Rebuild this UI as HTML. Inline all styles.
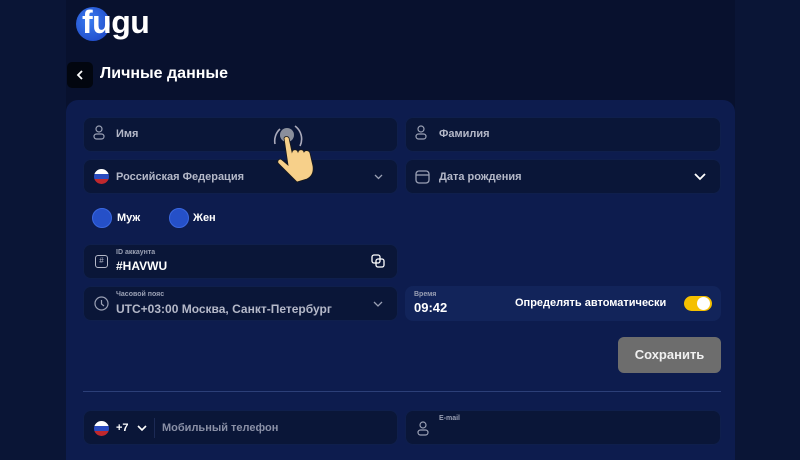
<!DOCTYPE html><html><head><meta charset="utf-8"><style>
*{margin:0;padding:0;box-sizing:border-box}
body{width:800px;height:450px;background:#0a1536;font-family:"Liberation Sans",sans-serif;position:relative;overflow:hidden;color:#fff}
.top{position:absolute;left:66px;top:0;width:669px;height:450px;background:#08112e}
.panel{position:absolute;left:66px;top:100px;width:669px;height:360px;background:#0d1c4e;border-radius:12px 12px 0 0}
.f{position:absolute;background:#0a1638;border-radius:8px;border:1px solid #0f1f4c}
.t{position:absolute;font-weight:bold;font-size:11px;color:#b4b8c8}
.a{position:absolute}
</style></head><body>
<div class="top"></div>
<div class="a" style="left:76px;top:7px;width:34px;height:34px;border-radius:50%;background:radial-gradient(circle at 40% 40%,#3a7cf0,#1a3fc0)"></div>
<div class="a" style="left:82px;top:4px;font-size:32px;font-weight:bold;letter-spacing:-0.5px;color:#fff;line-height:36px">fugu</div>
<div class="a" style="left:67px;top:62px;width:26px;height:26px;background:#02060f;border-radius:5px"></div>
<svg class="a" style="left:76px;top:70px" width="8" height="10" fill="none" stroke="#fff" stroke-width="1.8"><path d="M6 1L2 5l4 4"/></svg>
<div class="a" style="left:100px;top:65px;font-size:16px;font-weight:bold">Личные данные</div>
<div class="panel"></div>

<div class="f" style="left:83px;top:117px;width:315px;height:35px"></div>
<div class="t" style="left:116px;top:128px">Имя</div>
<div class="f" style="left:405px;top:117px;width:316px;height:35px"></div>
<div class="t" style="left:439px;top:128px">Фамилия</div>
<svg class="a" style="left:92px;top:125px" width="14" height="16" fill="none" stroke="#9aa0b4" stroke-width="1.2"><circle cx="7" cy="4" r="3"/><rect x="2" y="9" width="10" height="5" rx="2.5"/></svg>
<svg class="a" style="left:414px;top:125px" width="14" height="16" fill="none" stroke="#9aa0b4" stroke-width="1.2"><circle cx="7" cy="4" r="3"/><rect x="2" y="9" width="10" height="5" rx="2.5"/></svg>

<div class="f" style="left:83px;top:159px;width:315px;height:35px"></div>
<div class="a" style="left:94px;top:169px;width:15px;height:15px;border-radius:50%;background:linear-gradient(#fff 33%,#2a4bbf 33% 66%,#c0282d 66%)"></div>
<div class="t" style="left:116px;top:171px">Российская Федерация</div>
<svg class="a" style="left:374px;top:174px" width="9" height="6" fill="none" stroke="#9aa0b4" stroke-width="1.3"><path d="M1 1l3.5 3.5L8 1"/></svg>
<div class="f" style="left:405px;top:159px;width:316px;height:35px"></div>
<svg class="a" style="left:415px;top:169px" width="15" height="15" fill="none" stroke="#9aa0b4" stroke-width="1.3"><rect x="1" y="2" width="13" height="12" rx="3"/><path d="M1 6h13"/></svg>
<div class="t" style="left:439px;top:171px">Дата рождения</div>
<svg class="a" style="left:694px;top:173px" width="12" height="8" fill="none" stroke="#fff" stroke-width="1.8"><path d="M1 1l5 5 5-5"/></svg>

<div class="a" style="left:92px;top:208px;width:20px;height:20px;border-radius:50%;background:#2550c8;border:1px solid #3a68e0"></div>
<div class="t" style="left:117px;top:212px;color:#fff">Муж</div>
<div class="a" style="left:169px;top:208px;width:20px;height:20px;border-radius:50%;background:#2550c8;border:1px solid #3a68e0"></div>
<div class="t" style="left:193px;top:212px;color:#fff">Жен</div>

<div class="f" style="left:83px;top:244px;width:315px;height:35px"></div>
<div class="a" style="left:95px;top:255px;width:13px;height:13px;border:1.3px solid #b4b8c8;border-radius:3px;font-size:8px;text-align:center;line-height:10px;color:#b4b8c8">#</div>
<div class="a" style="left:116px;top:249px;font-size:7px;color:#9aa0b4;font-weight:bold">ID аккаунта</div>
<div class="a" style="left:116px;top:259px;font-size:12px;font-weight:bold">#HAVWU</div>
<svg class="a" style="left:371px;top:254px" width="14" height="14" fill="none" stroke="#fff" stroke-width="1.3"><rect x="1" y="1" width="8" height="8" rx="2"/><rect x="5" y="5" width="8" height="8" rx="2"/></svg>

<div class="f" style="left:83px;top:286px;width:315px;height:35px"></div>
<svg class="a" style="left:94px;top:296px" width="15" height="15" fill="none" stroke="#9aa0b4" stroke-width="1.2"><circle cx="7.5" cy="7.5" r="6.5"/><path d="M7.5 4v4l2.5 2"/></svg>
<div class="a" style="left:116px;top:291px;font-size:7px;color:#9aa0b4;font-weight:bold">Часовой пояс</div>
<div class="a" style="left:116px;top:302px;font-size:12px;font-weight:bold;color:#b4b8c8">UTC+03:00 Москва, Санкт-Петербург</div>
<svg class="a" style="left:373px;top:301px" width="10" height="6" fill="none" stroke="#9aa0b4" stroke-width="1.3"><path d="M1 1l4 4 4-4"/></svg>

<div class="a" style="left:405px;top:286px;width:316px;height:35px;background:#12245a;border-radius:8px"></div>
<div class="a" style="left:414px;top:291px;font-size:7px;color:#9aa0b4;font-weight:bold">Время</div>
<div class="a" style="left:414px;top:300px;font-size:13px;font-weight:bold">09:42</div>
<div class="a" style="left:515px;top:297px;font-size:11px;font-weight:bold">Определять автоматически</div>
<div class="a" style="left:684px;top:296px;width:28px;height:15px;border-radius:8px;background:#f5c000"></div>
<div class="a" style="left:697px;top:297px;width:13px;height:13px;border-radius:50%;background:#fff"></div>

<div class="a" style="left:618px;top:337px;width:103px;height:36px;background:#6d6d6d;border-radius:6px;font-size:13px;font-weight:bold;text-align:center;line-height:36px;color:#f0f0f0">Сохранить</div>
<div class="a" style="left:83px;top:391px;width:638px;height:1px;background:#2c3f78"></div>

<div class="f" style="left:83px;top:410px;width:315px;height:35px"></div>
<div class="a" style="left:94px;top:421px;width:15px;height:15px;border-radius:50%;background:linear-gradient(#fff 33%,#2a4bbf 33% 66%,#c0282d 66%)"></div>
<div class="a" style="left:116px;top:422px;font-size:11px;font-weight:bold">+7</div>
<svg class="a" style="left:137px;top:425px" width="10" height="7" fill="none" stroke="#fff" stroke-width="1.6"><path d="M1 1l4 4 4-4"/></svg>
<div class="a" style="left:154px;top:418px;width:1px;height:20px;background:#1c2a55"></div>
<div class="t" style="left:162px;top:422px;color:#8a90a6">Мобильный телефон</div>
<div class="f" style="left:405px;top:410px;width:316px;height:35px"></div>
<svg class="a" style="left:417px;top:421px" width="12" height="15" fill="none" stroke="#9aa0b4" stroke-width="1.2"><circle cx="6" cy="4" r="3"/><rect x="1" y="9" width="10" height="5" rx="2.5"/></svg>
<div class="a" style="left:439px;top:415px;font-size:7px;color:#9aa0b4;font-weight:bold">E-mail</div>

<svg class="a" style="left:266px;top:118px" width="60" height="70">
<path d="M9 26a16 16 0 0 1 5-15M29 8a16 16 0 0 1 5 20" stroke="#aab" stroke-width="1.6" fill="none"/>
<circle cx="21" cy="17" r="7" fill="#8a8f9c"/>
<path d="M18 20c1-2 4-2 5 0l3 14c1-3 5-3 6 0 1-3 5-3 6 0 1-2 5-2 6 1l3 13c1 7-2 11-6 13l-10 3-12-12-7-7c-1-3 2-5 4-3l6 5z" fill="#f7d08a" stroke="#1a1a1a" stroke-width="0.8"/>
</svg>
</body></html>
